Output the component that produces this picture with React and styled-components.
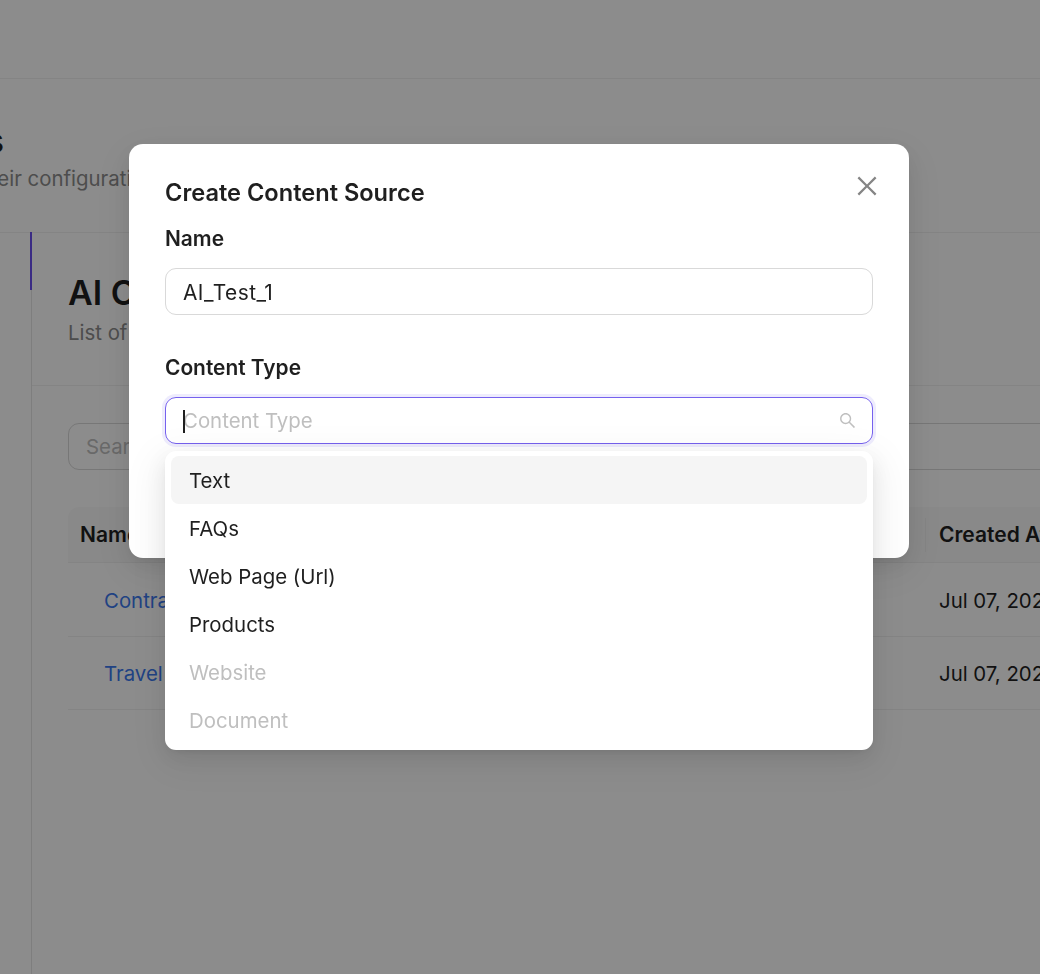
import React from "react";
import styled, { createGlobalStyle } from "styled-components";
import { AiOutlineClose, AiOutlineSearch } from "react-icons/ai";

const GlobalStyle = createGlobalStyle`
  html, body {
    margin: 0;
    height: 100%;
    overflow: hidden;
    background: #fff;
    font-family: Inter, "Liberation Sans", sans-serif;
    color: #1f1f1f;
  }
  * { box-sizing: border-box; }
`;

const options = [
  { label: "Text", active: true },
  { label: "FAQs" },
  { label: "Web Page (Url)" },
  { label: "Products" },
  { label: "Website", disabled: true },
  { label: "Document", disabled: true },
];

const rows = [
  { name: "Contract Terms", created: "Jul 07, 2023" },
  { name: "Travel Policy", created: "Jul 07, 2023" },
];

export default function App() {
  return (
    <>
      <GlobalStyle />
      <Page>
        <TopBar />
        <PageHead>
          <PageTitle>AI Content Sources</PageTitle>
          <PageSub>Manage AI content sources and their configuration</PageSub>
        </PageHead>
        <Body>
          <Sidebar>
            <SideItem />
          </Sidebar>
          <Main>
            <MainHead>
              <MainTitle>AI Content Sources</MainTitle>
              <MainSub>List of all the content sources</MainSub>
            </MainHead>
            <MainContent>
              <SearchBox>Search</SearchBox>
              <Table>
                <HeadRow>
                  <NameHead>Name</NameHead>
                  <DateHead>Created At</DateHead>
                </HeadRow>
                {rows.map((row) => (
                  <Row key={row.name}>
                    <NameCell>{row.name}</NameCell>
                    <DateCell>{row.created}</DateCell>
                  </Row>
                ))}
              </Table>
            </MainContent>
          </Main>
        </Body>
      </Page>

      <Overlay>
        <Modal>
          <CloseButton aria-label="Close">
            <AiOutlineClose size={28} />
          </CloseButton>
          <ModalTitle>Create Content Source</ModalTitle>
          <Field>
            <Label>Name</Label>
            <TextInput defaultValue="AI_Test_1" />
          </Field>
          <Field>
            <Label>Content Type</Label>
            <SelectWrap>
              <SelectBox>
                <Caret />
                <Placeholder>Content Type</Placeholder>
                <SearchIcon>
                  <AiOutlineSearch size={19} />
                </SearchIcon>
              </SelectBox>
              <Dropdown>
                {options.map((opt) => (
                  <Option key={opt.label} $active={opt.active} $disabled={opt.disabled}>
                    {opt.label}
                  </Option>
                ))}
              </Dropdown>
            </SelectWrap>
          </Field>
        </Modal>
      </Overlay>
    </>
  );
}

const Page = styled.div`
  width: 1500px;
  margin-left: -208px;
  height: 974px;
  display: flex;
  flex-direction: column;
`;
const TopBar = styled.div`
  height: 79px;
  flex: none;
  border-bottom: 1px solid #f0f0f0;
`;
const PageHead = styled.div`
  height: 154px;
  flex: none;
  padding: 42px 0 0 32px;
  border-bottom: 1px solid #f0f0f0;
`;
const PageTitle = styled.h1`
  margin: 0;
  font-size: 34px;
  line-height: 40px;
  font-weight: 600;
  height: 40px;
  color: #1f1f1f;
  width: 180px;
  white-space: nowrap;
  direction: rtl;
  overflow: hidden;
`;
const PageSub = styled.p`
  margin: 3px 0 0 -157px;
  font-size: 20.4px;
  line-height: 30px;
  color: #8c8c8c;
  white-space: nowrap;
`;
const Body = styled.div`
  flex: 1;
  display: flex;
`;
const Sidebar = styled.div`
  width: 240px;
  flex: none;
  border-right: 1px solid #e5e5e5;
`;
const SideItem = styled.div`
  height: 58px;
  margin: -1px -1px 0 0;
  border-right: 2px solid #6a4ff0;
`;
const Main = styled.div`
  flex: 1;
`;
const MainHead = styled.div`
  height: 153px;
  padding: 38px 36px 0;
  border-bottom: 1px solid #f0f0f0;
`;
const MainTitle = styled.h2`
  margin: 0;
  font-size: 34px;
  line-height: 44px;
  font-weight: 600;
  color: #1f1f1f;
`;
const MainSub = styled.p`
  margin: 3px 0 0;
  font-size: 20.4px;
  line-height: 30px;
  color: #8c8c8c;
`;
const MainContent = styled.div`
  padding: 37px 36px 0;
`;
const SearchBox = styled.div`
  height: 47px;
  border: 1px solid #d9d9d9;
  border-radius: 11px;
  padding: 0 17px;
  display: flex;
  align-items: center;
  font-size: 20.4px;
  color: #bfbfbf;
`;
const Table = styled.div`
  margin-top: 37px;
`;
const HeadRow = styled.div`
  height: 56px;
  display: flex;
  align-items: center;
  background: #fafafa;
  border-radius: 11px 11px 0 0;
  border-bottom: 1px solid #f0f0f0;
  font-size: 21px;
  font-weight: 600;
`;
const NameHead = styled.div`
  width: 857px;
  padding-left: 12px;
`;
const DateHead = styled.div`
  flex: 1;
  padding-left: 13px;
  border-left: 1px solid #f0f0f0;
  line-height: 34px;
`;
const Row = styled.div`
  height: 73.5px;
  padding-top: 2px;
  display: flex;
  align-items: center;
  border-bottom: 1px solid #f0f0f0;
  font-size: 20.4px;
`;
const NameCell = styled.div`
  width: 857px;
  padding-left: 36px;
  color: #3b78ee;
`;
const DateCell = styled.div`
  flex: 1;
  padding-left: 14px;
`;

const Overlay = styled.div`
  position: fixed;
  inset: 0;
  background: rgba(0, 0, 0, 0.45);
  display: flex;
  justify-content: center;
  align-items: flex-start;
  padding: 144px 2px 0 0;
`;
const Modal = styled.div`
  position: relative;
  width: 780px;
  height: 414px;
  background: #fff;
  border-radius: 14px;
  padding: 32px 36px;
  box-shadow: 0 8px 21px rgba(0, 0, 0, 0.08), 0 4px 8px -5px rgba(0, 0, 0, 0.12),
    0 12px 37px 11px rgba(0, 0, 0, 0.05);
`;
const CloseButton = styled.button`
  position: absolute;
  top: 28px;
  right: 28px;
  padding: 0;
  width: 28px;
  height: 28px;
  border: none;
  background: none;
  color: #858585;
  display: flex;
`;
const ModalTitle = styled.h3`
  margin: 0;
  font-size: 23.6px;
  line-height: 34px;
  font-weight: 600;
  color: #1f1f1f;
`;
const Field = styled.div`
  margin-bottom: 38px;
`;
const Label = styled.div`
  margin-top: 14px;
  font-size: 20.9px;
  line-height: 30px;
  font-weight: 600;
  margin-bottom: 14px;
  color: #1f1f1f;
`;
const TextInput = styled.input`
  display: block;
  width: 100%;
  height: 47px;
  padding: 1px 17px 0;
  border: 1px solid #d9d9d9;
  border-radius: 11px;
  font: inherit;
  font-size: 20.9px;
  letter-spacing: 0.45px;
  color: #1f1f1f;
  outline: none;
`;
const SelectWrap = styled.div`
  position: relative;
`;
const SelectBox = styled.div`
  position: relative;
  height: 47px;
  padding: 0 17px;
  display: flex;
  align-items: center;
  justify-content: space-between;
  border: 1px solid #7661ee;
  border-radius: 11px;
  box-shadow: 0 0 0 3px rgba(90, 70, 240, 0.1);
  font-size: 20.4px;
`;
const Caret = styled.span`
  position: absolute;
  left: 17px;
  top: 12px;
  width: 2px;
  height: 23px;
  background: #1f1f1f;
`;
const Placeholder = styled.span`
  color: #bfbfbf;
`;
const SearchIcon = styled.span`
  display: flex;
  color: #bfbfbf;
  margin-right: -2px;
`;
const Dropdown = styled.div`
  position: absolute;
  top: 54px;
  left: 0;
  right: 0;
  padding: 5px 6px 6px;
  background: #fff;
  border-radius: 11px;
  box-shadow: 0 8px 21px rgba(0, 0, 0, 0.08), 0 4px 8px -5px rgba(0, 0, 0, 0.12),
    0 12px 37px 11px rgba(0, 0, 0, 0.05);
`;
const Option = styled.div`
  height: 48px;
  padding: 0 18px;
  display: flex;
  align-items: center;
  border-radius: 8px;
  font-size: 20.4px;
  background: ${({ $active }) => ($active ? "#f5f5f5" : "transparent")};
  color: ${({ $disabled }) => ($disabled ? "#bfbfbf" : "#1f1f1f")};
`;
